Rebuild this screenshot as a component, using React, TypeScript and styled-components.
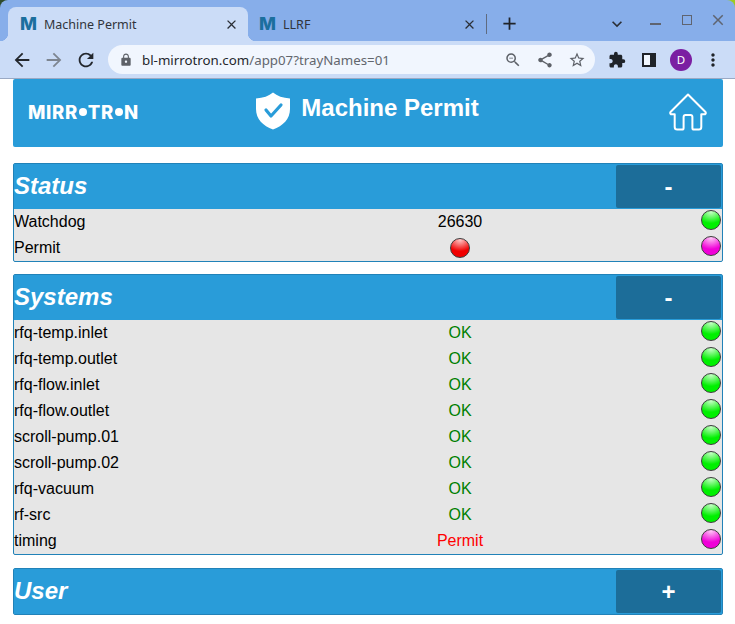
import { createGlobalStyle, styled } from 'styled-components';
import {
  MdAdd,
  MdArrowBack,
  MdArrowForward,
  MdClose,
  MdExtension,
  MdKeyboardArrowDown,
  MdLock,
  MdMoreVert,
  MdRefresh,
  MdShare,
  MdStarBorder,
  MdZoomOut,
} from 'react-icons/md';

const Global = createGlobalStyle`
  html, body { margin: 0; padding: 0; background: #fff; }
  body { font-family: "Liberation Sans", Arial, sans-serif; overflow: hidden; }
`;

const Desktop = styled.div`
  background: linear-gradient(90deg, #2f4a2a 50%, #9ccb20 50%);
`;

const TabStrip = styled.div`
  height: 41px;
  background: #87aeea;
  border-radius: 8px 8px 0 0;
  display: flex;
  align-items: flex-end;
  padding-left: 8px;
  box-sizing: border-box;
  color: #3b4350;
`;

const ActiveTab = styled.div`
  position: relative;
  width: 240px;
  height: 34px;
  background: #cbdcf7;
  border-radius: 8px 8px 0 0;
  display: flex;
  align-items: center;
  padding-left: 12px;
  box-sizing: border-box;
  ::before,
  ::after {
    content: '';
    position: absolute;
    bottom: 0;
    width: 8px;
    height: 8px;
  }
  ::before {
    left: -8px;
    background: radial-gradient(circle at 0 0, #87aeea 8px, #cbdcf7 8.5px);
  }
  ::after {
    right: -8px;
    background: radial-gradient(circle at 100% 0, #87aeea 8px, #cbdcf7 8.5px);
  }
`;

const InactiveTab = styled.div`
  width: 238px;
  height: 34px;
  display: flex;
  align-items: center;
  padding-left: 11px;
  box-sizing: border-box;
`;

const Favicon = styled.span`
  font-family: Inter, "Liberation Sans", sans-serif;
  font-weight: 800;
  font-size: 18px;
  line-height: 20px;
  color: #1b6f9e;
  width: 24px;
`;

const TabTitle = styled.span`
  flex: 1;
  font-family: "Noto Sans", sans-serif;
  font-size: 12.5px;
  color: #30343b;
  white-space: nowrap;
`;

const TabClose = styled(MdClose)`
  font-size: 15px;
  color: #2b2f36;
  margin-right: 9px;
  flex: none;
`;

const TabDivider = styled.div`
  width: 1px;
  height: 20px;
  background: #5f6b80;
  margin: 0 0 7px 0;
  align-self: flex-end;
`;

const NewTab = styled(MdAdd)`
  font-size: 21px;
  color: #20242a;
  margin: 0 0 7px 12px;
  flex: none;
`;

const TabList = styled(MdKeyboardArrowDown)`
  font-size: 20px;
  color: #2b2f36;
  margin: 0 0 7px 87px;
  flex: none;
`;

const WindowButtons = styled.div`
  display: flex;
  align-items: center;
  gap: 21px;
  margin: 0 0 13px 23px;
  height: 16px;
  color: #5f6470;
`;

const MinimizeMark = styled.span`
  width: 11px;
  height: 2px;
  background: #5f6470;
  margin-top: 7px;
`;

const MaximizeMark = styled.span`
  width: 8px;
  height: 8px;
  border: 1.5px solid #5f6470;
  box-sizing: content-box;
`;

const WindowClose = styled(MdClose)`
  font-size: 18px;
  color: #5f6470;
  margin-left: -4px;
`;

const Toolbar = styled.div`
  height: 37px;
  background: #cbdcf7;
  border-bottom: 1px solid #9aa9c4;
  box-sizing: content-box;
  display: flex;
  align-items: center;
  padding-left: 11px;
  color: #2a2e35;
`;

const NavButton = styled.span<{ $muted?: boolean }>`
  width: 32px;
  height: 24px;
  font-size: 22px;
  display: flex;
  align-items: center;
  justify-content: flex-start;
  color: ${({ $muted }) => ($muted ? '#7d8590' : '#23272d')};
`;

const Omnibox = styled.div`
  width: 487px;
  height: 29px;
  margin-left: 1px;
  border-radius: 15px;
  background: #f1f6fe;
  display: flex;
  align-items: center;
  padding: 0 2px 0 11px;
  box-sizing: border-box;
  color: #5d6168;
`;

const Url = styled.span`
  flex: 1;
  margin-left: 9px;
  font-family: "Noto Sans", sans-serif;
  font-size: 13.3px;
  color: #62666d;
  white-space: nowrap;
`;

const Host = styled.span`
  color: #24272c;
`;

const OmniIcon = styled.span`
  width: 32px;
  font-size: 18px;
  display: flex;
  align-items: center;
  justify-content: center;
`;

const ToolIcon = styled.span`
  width: 32px;
  margin-left: 6px;
  display: flex;
  align-items: center;
  justify-content: center;
  font-size: 18px;
  color: #1f2329;
  & + & {
    margin-left: 0;
  }
`;

const MoreIcon = styled(MdMoreVert)`
  font-size: 20px;
`;

const SidePanelIcon = styled.span`
  width: 6px;
  height: 10px;
  box-sizing: content-box;
  background: #f1f6fe;
  border: 2px solid #1f2329;
  border-right-width: 6px;
`;

const Avatar = styled.span`
  width: 22px;
  height: 22px;
  border-radius: 50%;
  background: #7b1fa2;
  color: #fff;
  font-family: "Noto Sans", sans-serif;
  font-size: 11.5px;
  display: flex;
  align-items: center;
  justify-content: center;
`;

const Page = styled.main`
  padding: 0 12px 0 13px;
  display: flex;
  flex-direction: column;
`;

const AppHeader = styled.header`
  height: 68px;
  background: #299cd9;
  border-radius: 2px;
  display: grid;
  grid-template-columns: 1fr auto 1fr;
  align-items: center;
  color: #fff;
  margin-bottom: 16px;
`;

const Logo = styled.div`
  display: flex;
  align-items: center;
  padding-left: 15px;
  font-family: Inter, "Liberation Sans", sans-serif;
  font-weight: 800;
  font-size: 18.5px;
  line-height: 20px;
  letter-spacing: 0.65px;
  margin-bottom: 2px;
`;

const LogoDot = styled.span`
  width: 8px;
  height: 8px;
  border-radius: 50%;
  background: #fff;
  margin: 0 1px;
`;

const LogoT = styled.span`
  position: relative;
  ::after {
    content: '';
    position: absolute;
    left: -5px;
    right: -4px;
    top: 9px;
    height: 2px;
    background: #fff;
  }
`;

const TitleWrap = styled.div`
  display: flex;
  align-items: center;
  gap: 10px;
  margin: 0 2px 5px 0;
`;

const Title = styled.h1`
  margin: 0 0 5px;
  font-size: 24px;
  font-weight: 700;
  line-height: 30px;
`;

const HomeWrap = styled.div`
  display: flex;
  justify-content: flex-end;
  padding-right: 16px;
  margin-bottom: 2px;
`;

const Panel = styled.section<{ $gap?: number }>`
  border: 1px solid #2182b8;
  border-radius: 2px;
  margin-bottom: ${({ $gap }) => $gap ?? 0}px;
  background: #e6e6e6;
`;

const PanelHeader = styled.div`
  height: 45px;
  background: #299cd9;
  display: flex;
  align-items: center;
  justify-content: space-between;
  padding: 0 1px 0 0;
  color: #fff;
`;

const PanelTitle = styled.h2`
  margin: 0 0 2px;
  font-size: 24px;
  font-weight: 700;
  font-style: italic;
`;

const Toggle = styled.button`
  width: 105px;
  height: 43px;
  border: 0;
  padding: 0;
  border-radius: 2px;
  background: #1c6d99;
  color: #fff;
  font-family: inherit;
  font-size: 24px;
  font-weight: 700;
  line-height: 1;
`;

const Row = styled.div`
  height: 26px;
  display: grid;
  grid-template-columns: 300px 292px 1fr;
  align-items: center;
  padding: 0 1px 0 0;
  font-size: 16px;
  color: #000;
`;

const Value = styled.span<{ $color?: string }>`
  display: flex;
  justify-content: center;
  color: ${({ $color }) => $color ?? '#000'};
`;

const LedCell = styled.span`
  display: flex;
  justify-content: flex-end;
`;

const Led = styled.span<{ $color: string; $light: string }>`
  width: 20px;
  height: 20px;
  box-sizing: border-box;
  border-radius: 50%;
  border: 1.5px solid #3c3c3c;
  margin-top: -4px;
  background: radial-gradient(
    ellipse 85% 70% at 50% 5%,
    ${({ $light }) => $light} 0%,
    ${({ $color }) => $color} 90%
  );
  ${Value} & {
    margin-top: 0;
  }
`;

const GreenLed = () => <Led $color="#00f000" $light="#c8ffc8" />;
const MagentaLed = () => <Led $color="#f000d8" $light="#ffc8f6" />;
const RedLed = () => <Led $color="#f00000" $light="#ffc8c8" />;

const systems = [
  'rfq-temp.inlet',
  'rfq-temp.outlet',
  'rfq-flow.inlet',
  'rfq-flow.outlet',
  'scroll-pump.01',
  'scroll-pump.02',
  'rfq-vacuum',
  'rf-src',
];

const ShieldIcon = () => (
  <svg width="36" height="38" viewBox="0 0 36 38">
    <path
      fill="#fff"
      d="M18 0.5 C22 4 28 6 35 6.5 L35 17 C35 27 28 34 18 37.5 C8 34 1 27 1 17 L1 6.5 C8 6 14 4 18 0.5 Z"
    />
    <path
      fill="none"
      stroke="#299cd9"
      strokeWidth="3.2"
      strokeLinecap="round"
      strokeLinejoin="round"
      d="M11 18 L16 24 L26 13"
    />
  </svg>
);

const HomeIcon = () => (
  <svg width="38" height="38" viewBox="0 0 38 38" fill="none">
    <path
      stroke="#fff"
      strokeWidth="2"
      strokeLinejoin="round"
      d="M19 1.5 L36.5 19 C37.2 20.2 36.6 21.3 35 21.3 L32.3 21.3 L32.3 34 C32.3 35.7 31.3 36.6 29.8 36.6 L25 36.6 C24 36.6 23.4 36 23.4 35 L23.4 24 C23.4 22.8 22.6 22 21.4 22 L16.6 22 C15.4 22 14.6 22.8 14.6 24 L14.6 35 C14.6 36 14 36.6 13 36.6 L8.2 36.6 C6.7 36.6 5.7 35.7 5.7 34 L5.7 21.3 L3 21.3 C1.4 21.3 0.8 20.2 1.5 19 Z"
    />
  </svg>
);

export default function App() {
  return (
    <>
      <Global />
      <Desktop>
        <TabStrip>
          <ActiveTab>
            <Favicon>M</Favicon>
            <TabTitle>Machine Permit</TabTitle>
            <TabClose />
          </ActiveTab>
          <InactiveTab>
            <Favicon>M</Favicon>
            <TabTitle>LLRF</TabTitle>
            <TabClose />
          </InactiveTab>
          <TabDivider />
          <NewTab />
          <TabList />
          <WindowButtons>
            <MinimizeMark />
            <MaximizeMark />
            <WindowClose />
          </WindowButtons>
        </TabStrip>
      </Desktop>
      <Toolbar>
        <NavButton>
          <MdArrowBack />
        </NavButton>
        <NavButton $muted>
          <MdArrowForward />
        </NavButton>
        <NavButton>
          <MdRefresh />
        </NavButton>
        <Omnibox>
          <MdLock size={14} />
          <Url>
            <Host>bl-mirrotron.com</Host>/app07?trayNames=01
          </Url>
          <OmniIcon>
            <MdZoomOut />
          </OmniIcon>
          <OmniIcon>
            <MdShare />
          </OmniIcon>
          <OmniIcon>
            <MdStarBorder />
          </OmniIcon>
        </Omnibox>
        <ToolIcon>
          <MdExtension />
        </ToolIcon>
        <ToolIcon>
          <SidePanelIcon />
        </ToolIcon>
        <ToolIcon>
          <Avatar>D</Avatar>
        </ToolIcon>
        <ToolIcon>
          <MoreIcon />
        </ToolIcon>
      </Toolbar>
      <Page>
        <AppHeader>
          <Logo>
            MIRR
            <LogoDot />
            <LogoT>T</LogoT>R
            <LogoDot />N
          </Logo>
          <TitleWrap>
            <ShieldIcon />
            <Title>Machine Permit</Title>
          </TitleWrap>
          <HomeWrap>
            <HomeIcon />
          </HomeWrap>
        </AppHeader>

        <Panel $gap={12}>
          <PanelHeader>
            <PanelTitle>Status</PanelTitle>
            <Toggle>-</Toggle>
          </PanelHeader>
          <Row>
            <span>Watchdog</span>
            <Value>26630</Value>
            <LedCell>
              <GreenLed />
            </LedCell>
          </Row>
          <Row>
            <span>Permit</span>
            <Value>
              <RedLed />
            </Value>
            <LedCell>
              <MagentaLed />
            </LedCell>
          </Row>
        </Panel>

        <Panel $gap={13}>
          <PanelHeader>
            <PanelTitle>Systems</PanelTitle>
            <Toggle>-</Toggle>
          </PanelHeader>
          {systems.map((name) => (
            <Row key={name}>
              <span>{name}</span>
              <Value $color="#008000">OK</Value>
              <LedCell>
                <GreenLed />
              </LedCell>
            </Row>
          ))}
          <Row>
            <span>timing</span>
            <Value $color="#ff0000">Permit</Value>
            <LedCell>
              <MagentaLed />
            </LedCell>
          </Row>
        </Panel>

        <Panel>
          <PanelHeader>
            <PanelTitle>User</PanelTitle>
            <Toggle>+</Toggle>
          </PanelHeader>
        </Panel>
      </Page>
    </>
  );
}
